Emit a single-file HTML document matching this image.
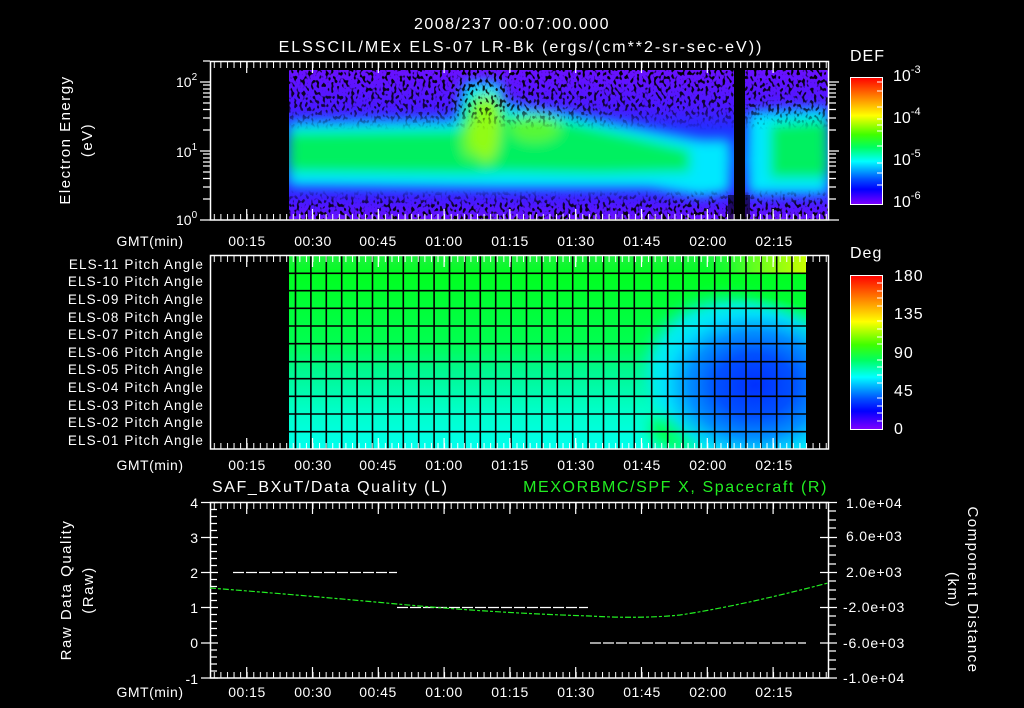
<!DOCTYPE html>
<html><head><meta charset="utf-8"><style>
html,body{margin:0;padding:0;background:#000;}
svg{display:block;}
text{font-family:"Liberation Sans",sans-serif;fill:#fff;}
</style></head><body>
<svg width="1024" height="708" viewBox="0 0 1024 708" xmlns="http://www.w3.org/2000/svg">
<defs>
<pattern id="mtick" patternUnits="userSpaceOnUse" x="246.7" y="0" width="6.58" height="708">
<rect x="0" y="0" width="1" height="708" fill="#fff"/>
</pattern>
<linearGradient id="specbg" x1="0" y1="0" x2="0" y2="1">
<stop offset="0" stop-color="#6a10ff"/><stop offset="0.25" stop-color="#4a18ff"/>
<stop offset="0.4" stop-color="#2030ff"/><stop offset="0.6" stop-color="#1050ff"/>
<stop offset="0.78" stop-color="#2a20ff"/><stop offset="1" stop-color="#6a10ff"/></linearGradient>
<linearGradient id="cbar" x1="0" y1="0" x2="0" y2="1">
<stop offset="0" stop-color="#ff0000"/><stop offset="0.15" stop-color="#ff8000"/>
<stop offset="0.3" stop-color="#ffff00"/><stop offset="0.45" stop-color="#40ff00"/>
<stop offset="0.55" stop-color="#00ff60"/><stop offset="0.66" stop-color="#00ffff"/>
<stop offset="0.8" stop-color="#0050ff"/><stop offset="0.88" stop-color="#0000ff"/>
<stop offset="1" stop-color="#8000ff"/></linearGradient>
<linearGradient id="pitch" x1="0" y1="0" x2="0" y2="1">
<stop offset="0" stop-color="#20f040"/><stop offset="0.1" stop-color="#00ff20"/>
<stop offset="0.45" stop-color="#00ff50"/><stop offset="0.6" stop-color="#00f890"/>
<stop offset="0.8" stop-color="#00ffc8"/><stop offset="1" stop-color="#00ffee"/></linearGradient>
<radialGradient id="blob" cx="755" cy="385" r="110" gradientUnits="userSpaceOnUse" gradientTransform="translate(755 385) scale(1 0.8) translate(-755 -385)">
<stop offset="0" stop-color="#0030ff"/><stop offset="0.35" stop-color="#0050ff"/>
<stop offset="0.6" stop-color="#0090ff"/><stop offset="0.8" stop-color="#00d8ff" stop-opacity="0.85"/>
<stop offset="1" stop-color="#00ffee" stop-opacity="0"/></radialGradient>
<linearGradient id="topright" x1="0" y1="0" x2="1" y2="0">
<stop offset="0" stop-color="#00ff40" stop-opacity="0"/><stop offset="0.5" stop-color="#60ff20"/><stop offset="1" stop-color="#c8ff00"/></linearGradient>
<filter id="blur" x="-20%" y="-20%" width="140%" height="140%"><feGaussianBlur stdDeviation="6"/></filter>
<filter id="pblur" x="-20%" y="-20%" width="140%" height="140%"><feGaussianBlur stdDeviation="8"/></filter>
<filter id="noise" x="0" y="0" width="100%" height="100%">
<feTurbulence type="fractalNoise" baseFrequency="0.35 0.25" numOctaves="1" seed="3"/>
<feColorMatrix type="matrix" values="0 0 0 0 0  0 0 0 0 0  0 0 0 0 0  9 0 0 0 -4.75"/>
</filter>
<linearGradient id="nmg" x1="0" y1="0" x2="0" y2="1">
<stop offset="0" stop-color="#fff"/><stop offset="0.25" stop-color="#fff" stop-opacity="0.75"/>
<stop offset="0.4" stop-color="#fff" stop-opacity="0"/><stop offset="0.8" stop-color="#fff" stop-opacity="0"/>
<stop offset="0.9" stop-color="#fff" stop-opacity="0.85"/><stop offset="1" stop-color="#fff"/></linearGradient>
<mask id="nmask"><rect x="289" y="70" width="540" height="150" fill="url(#nmg)"/></mask>
<clipPath id="specclip"><rect x="289" y="70" width="539" height="149"/></clipPath>
<clipPath id="pclip"><rect x="289" y="255" width="517" height="194"/></clipPath>
</defs>

<text x="512" y="29" font-size="16" text-anchor="middle" letter-spacing="1.5">2008/237 00:07:00.000</text>
<text x="521" y="52" font-size="16" text-anchor="middle" letter-spacing="2">ELSSCIL/MEx ELS-07 LR-Bk  (ergs/(cm**2-sr-sec-eV))</text>

<g clip-path="url(#specclip)">
<rect x="289" y="70" width="540" height="150" fill="url(#specbg)"/>
<g filter="url(#blur)">
<polygon fill="#00e8ff" points="289,122 455,120 465,82 500,82 505,104 560,112 650,130 700,140 730,140 730,192 700,196 650,188 500,188 289,186"/>
<polygon fill="#00e8ff" points="748,112 828,108 828,194 748,194"/>
<polygon fill="#00f060" points="289,132 458,130 470,95 500,95 505,115 560,120 640,138 690,150 690,172 600,174 505,172 470,174 289,172"/>
<polygon fill="#00f060" points="770,124 828,120 828,178 770,178"/>
<ellipse cx="486" cy="128" rx="14" ry="34" fill="#c0ff00" opacity="0.75"/>
<ellipse cx="470" cy="140" rx="8" ry="18" fill="#b0ff00" opacity="0.6"/>
<ellipse cx="535" cy="128" rx="25" ry="14" fill="#a0ff10" opacity="0.55"/>
</g>
<rect x="289" y="70" width="540" height="150" fill="#000" filter="url(#noise)" mask="url(#nmask)"/>
<rect x="734" y="70" width="11" height="150" fill="#000"/>
<rect x="728" y="195" width="22" height="24" fill="#000" opacity="0.6"/>
</g>
<rect x="210.5" y="61.5" width="618" height="158.5" fill="none" stroke="#fff" stroke-width="1.5"/>
<rect x="210" y="62" width="618" height="6" fill="url(#mtick)"/>
<rect x="210" y="214" width="618" height="6" fill="url(#mtick)"/>
<path stroke="#fff" stroke-width="1.2" d="M246.7,62v11M312.5,62v11M378.3,62v11M444.1,62v11M509.9,62v11M575.7,62v11M641.5,62v11M707.3,62v11M773.1,62v11M246.7,220v-11M312.5,220v-11M378.3,220v-11M444.1,220v-11M509.9,220v-11M575.7,220v-11M641.5,220v-11M707.3,220v-11M773.1,220v-11"/>
<path stroke="#fff" stroke-width="1.2" d="M200,220h10M200,151h10M200,82h10M203,199h7M203,187h7M203,178.5h7M203,172h7M203,166h7M203,162h7M203,158h7M203,154h7M203,130h7M203,118h7M203,109.5h7M203,103h7M203,97h7M203,93h7M203,89h7M203,85h7M203,61h7
M829,220h10M829,151h10M829,82h10M829,199h7M829,187h7M829,178.5h7M829,172h7M829,166h7M829,162h7M829,158h7M829,154h7M829,130h7M829,118h7M829,109.5h7M829,103h7M829,97h7M829,93h7M829,89h7M829,85h7"/>
<text x="176" y="87" font-size="14">10<tspan font-size="10" dy="-7">2</tspan></text>
<text x="176" y="157" font-size="14">10<tspan font-size="10" dy="-7">1</tspan></text>
<text x="176" y="225" font-size="14">10<tspan font-size="10" dy="-7">0</tspan></text>
<text transform="translate(70,140) rotate(-90)" font-size="15" text-anchor="middle" letter-spacing="1.5">Electron Energy</text>
<text transform="translate(92,140) rotate(-90)" font-size="15" text-anchor="middle" letter-spacing="1.5">(eV)</text>
<g font-size="14" text-anchor="middle" letter-spacing="0.5">
<text x="150" y="246">GMT(min)</text>
<text x="247" y="246">00:15</text><text x="313" y="246">00:30</text><text x="378" y="246">00:45</text><text x="444" y="246">01:00</text><text x="510" y="246">01:15</text><text x="576" y="246">01:30</text><text x="642" y="246">01:45</text><text x="708" y="246">02:00</text><text x="774" y="246">02:15</text>
</g>
<text x="850" y="61" font-size="16" letter-spacing="1">DEF</text>
<rect x="850.5" y="77.5" width="32" height="127" fill="url(#cbar)" stroke="#fff" stroke-width="1"/>
<path stroke="#fff" d="M877,82h5M877,91h5M877,107h5M877,119h5M877,125h5M877,131h5M877,146h5M877,163h5M877,173h5M877,185h5"/>
<g font-size="16"><text x="893" y="81">10<tspan font-size="11" dy="-8">-3</tspan></text>
<text x="893" y="123">10<tspan font-size="11" dy="-8">-4</tspan></text>
<text x="893" y="165">10<tspan font-size="11" dy="-8">-5</tspan></text>
<text x="893" y="207">10<tspan font-size="11" dy="-8">-6</tspan></text></g>

<g clip-path="url(#pclip)">
<rect x="289" y="255" width="517" height="194" fill="url(#pitch)"/>
<g filter="url(#pblur)">
<ellipse cx="728" cy="370" rx="80" ry="70" fill="#00e8ff" opacity="0.9"/>
<ellipse cx="680" cy="430" rx="30" ry="20" fill="#00ff50"/>
</g>
<rect x="651" y="255" width="155" height="194" fill="url(#blob)"/>
<rect x="700" y="255" width="106" height="18" fill="url(#topright)"/>
<path stroke="#000" stroke-width="1.6" fill="none" d="M295.5,255v194M310.9,255v194M326.3,255v194M341.7,255v194M357.1,255v194M372.5,255v194M387.9,255v194M403.3,255v194M418.7,255v194M434.1,255v194M449.5,255v194M464.9,255v194M480.3,255v194M495.7,255v194M511.1,255v194M526.5,255v194M541.9,255v194M557.3,255v194M572.7,255v194M588.1,255v194M603.5,255v194M618.9,255v194M634.3,255v194M651.7,255v194M667.7,255v194M683,255v194M699,255v194M714.7,255v194M730,255v194M746,255v194M761,255v194M776.7,255v194M792,255v194
M289,273.3h517M289,290.7h517M289,308.3h517M289,326h517M289,343.7h517M289,361.7h517M289,378.7h517M289,396.3h517M289,414h517M289,431.7h517"/>
</g>
<rect x="210.5" y="255.5" width="618" height="193.5" fill="none" stroke="#fff" stroke-width="1.5"/>
<rect x="210" y="256" width="618" height="6" fill="url(#mtick)"/>
<rect x="210" y="443" width="618" height="6" fill="url(#mtick)"/>
<path stroke="#fff" stroke-width="1.2" d="M246.7,256v11M312.5,256v11M378.3,256v11M444.1,256v11M509.9,256v11M575.7,256v11M641.5,256v11M707.3,256v11M773.1,256v11M246.7,449v-11M312.5,449v-11M378.3,449v-11M444.1,449v-11M509.9,449v-11M575.7,449v-11M641.5,449v-11M707.3,449v-11M773.1,449v-11"/>
<g font-size="13.5" text-anchor="end" letter-spacing="1.1">
<text x="204" y="269">ELS-11 Pitch Angle</text><text x="204" y="286">ELS-10 Pitch Angle</text><text x="204" y="304">ELS-09 Pitch Angle</text><text x="204" y="322">ELS-08 Pitch Angle</text><text x="204" y="339">ELS-07 Pitch Angle</text><text x="204" y="357">ELS-06 Pitch Angle</text><text x="204" y="374">ELS-05 Pitch Angle</text><text x="204" y="392">ELS-04 Pitch Angle</text><text x="204" y="410">ELS-03 Pitch Angle</text><text x="204" y="427">ELS-02 Pitch Angle</text><text x="204" y="445">ELS-01 Pitch Angle</text>
</g>
<g font-size="14" text-anchor="middle" letter-spacing="0.5">
<text x="150" y="470">GMT(min)</text>
<text x="247" y="470">00:15</text><text x="313" y="470">00:30</text><text x="378" y="470">00:45</text><text x="444" y="470">01:00</text><text x="510" y="470">01:15</text><text x="576" y="470">01:30</text><text x="642" y="470">01:45</text><text x="708" y="470">02:00</text><text x="774" y="470">02:15</text>
</g>
<text x="850" y="258" font-size="16" letter-spacing="1">Deg</text>
<rect x="850.5" y="275.5" width="32" height="154" fill="url(#cbar)" stroke="#fff" stroke-width="1"/>
<path stroke="#fff" d="M877,283h5M877,291h5M877,298h5M877,306h5M877,321h5M877,329h5M877,337h5M877,344h5M877,360h5M877,367h5M877,375h5M877,383h5M877,398h5M877,406h5M877,413h5M877,421h5"/>
<g font-size="16" letter-spacing="1"><text x="894" y="281">180</text><text x="894" y="319">135</text><text x="894" y="358">90</text><text x="894" y="396">45</text><text x="894" y="434">0</text></g>

<text x="212" y="492" font-size="16" letter-spacing="1.6">SAF_BXuT/Data Quality (L)</text>
<text x="828" y="492" font-size="16" text-anchor="end" letter-spacing="1.6" style="fill:#22ee22">MEXORBMC/SPF X, Spacecraft (R)</text>
<rect x="210.5" y="502.5" width="618" height="175.5" fill="none" stroke="#fff" stroke-width="1.5"/>
<rect x="210" y="503" width="618" height="6" fill="url(#mtick)"/>
<rect x="210" y="672" width="618" height="6" fill="url(#mtick)"/>
<path stroke="#fff" stroke-width="1.2" d="M246.7,503v11M312.5,503v11M378.3,503v11M444.1,503v11M509.9,503v11M575.7,503v11M641.5,503v11M707.3,503v11M773.1,503v11M246.7,678v-11M312.5,678v-11M378.3,678v-11M444.1,678v-11M509.9,678v-11M575.7,678v-11M641.5,678v-11M707.3,678v-11M773.1,678v-11
M201,502.5h17M201,537.5h17M201,572.5h17M201,607.5h17M201,643h17M201,678h17M210,509.5h7M210,516.5h7M210,523.5h7M210,530.5h7M210,544.5h7M210,551.5h7M210,558.5h7M210,565.5h7M210,579.5h7M210,586.5h7M210,593.5h7M210,600.5h7M210,614.5h7M210,621.5h7M210,628.5h7M210,635.5h7M210,650h7M210,657h7M210,664h7M210,671h7
M820,502.5h17M820,537.5h17M820,572.5h17M820,607.5h17M820,643h17M820,678h17M829,511h7M829,520h7M829,528h7M829,546h7M829,555h7M829,564h7M829,581h7M829,590h7M829,599h7M829,616h7M829,625h7M829,634h7M829,651h7M829,660h7M829,669h7"/>
<g font-size="14" text-anchor="end"><text x="198" y="508">4</text><text x="198" y="543">3</text><text x="198" y="578">2</text><text x="198" y="613">1</text><text x="198" y="648">0</text><text x="198" y="684">-1</text></g>
<g font-size="14" letter-spacing="0.8"><text x="846" y="508">1.0e+04</text><text x="846" y="541">6.0e+03</text><text x="846" y="577">2.0e+03</text><text x="843" y="612">-2.0e+03</text><text x="843" y="648">-6.0e+03</text><text x="843" y="683">-1.0e+04</text></g>
<path stroke="#fff" stroke-width="1.3" stroke-dasharray="11 2" fill="none" d="M233,572.5H397M397,607.5H588M590,643H806"/>
<path stroke="#22ee22" stroke-width="1.2" stroke-dasharray="6 2 3 2" fill="none" d="M210,588 Q300,595 397,604 T590,616 Q640,619 680,615 Q740,606 828,583"/>
<text transform="translate(71,590) rotate(-90)" font-size="15" text-anchor="middle" letter-spacing="1.5">Raw Data Quality</text>
<text transform="translate(93,590) rotate(-90)" font-size="15" text-anchor="middle" letter-spacing="1.5">(Raw)</text>
<text transform="translate(968,590) rotate(90)" font-size="15" text-anchor="middle" letter-spacing="1.5">Component Distance</text>
<text transform="translate(948,590) rotate(90)" font-size="15" text-anchor="middle" letter-spacing="1.5">(km)</text>
<g font-size="14" text-anchor="middle" letter-spacing="0.5">
<text x="150" y="697">GMT(min)</text>
<text x="247" y="697">00:15</text><text x="313" y="697">00:30</text><text x="378" y="697">00:45</text><text x="444" y="697">01:00</text><text x="510" y="697">01:15</text><text x="576" y="697">01:30</text><text x="642" y="697">01:45</text><text x="708" y="697">02:00</text><text x="774" y="697">02:15</text>
</g>
</svg>
</body></html>
